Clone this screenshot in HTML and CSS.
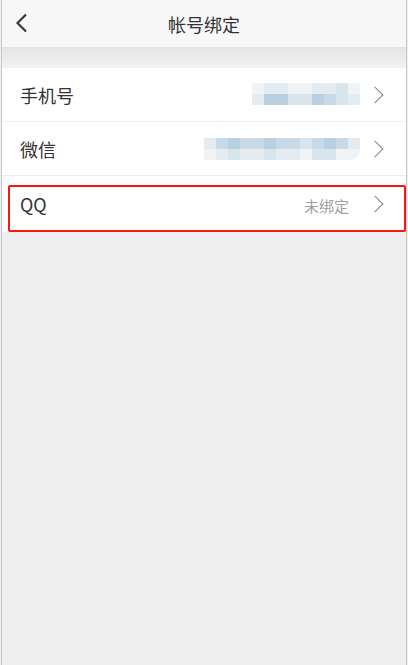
FILE: index.html
```html
<!DOCTYPE html>
<html lang="zh-CN">
<head>
    <meta charset="utf-8">
    <title>帐号绑定</title>
    <link rel="stylesheet" href="styles.css">
</head>
<body>
<div class="page">
    <header class="topbar">
        <a class="back" href="#">
            <svg width="14" height="20" viewBox="0 0 14 20"><path d="M11 1.5 L2.5 10 L11 18.5" fill="none" stroke="#3a3a3a" stroke-width="2.2"/></svg>
        </a>
        <h1>帐号绑定</h1>
    </header>
    <div class="gap"></div>
    <ul class="list">
        <li class="row">
            <span class="label">手机号</span>
            <div class="blur phone">
                <div class="tiles">
                    <i class="t1"></i><i class="t2"></i><i class="t2"></i><i class="t1"></i><i class="t1"></i><i class="t2"></i><i class="t2"></i><i class="t3"></i><i class="t1"></i>
                </div>
                <div class="tiles">
                    <i class="t2"></i><i class="t5"></i><i class="t5"></i><i class="t3"></i><i class="t3"></i><i class="t5"></i><i class="t4"></i><i class="t3"></i><i class="t2"></i>
                </div>
            </div>
            <span class="arrow"></span>
        </li>
        <li class="row">
            <span class="label">微信</span>
            <div class="blur wechat">
                <div class="tiles">
                    <i class="t2"></i><i class="t4"></i><i class="t5"></i><i class="t4"></i><i class="t4"></i><i class="t5"></i><i class="t4"></i><i class="t4"></i><i class="t3"></i><i class="t4"></i><i class="t5"></i><i class="t4"></i><i class="t2"></i>
                </div>
                <div class="tiles">
                    <i class="t1"></i><i class="t2"></i><i class="t3"></i><i class="t2"></i><i class="t2"></i><i class="t3"></i><i class="t2"></i><i class="t2"></i><i class="t1"></i><i class="t3"></i><i class="t3"></i><i class="t1"></i><i class="t1"></i>
                </div>
            </div>
            <span class="arrow"></span>
        </li>
        <li class="row qq">
            <span class="label">QQ</span>
            <span class="status">未绑定</span>
            <span class="arrow"></span>
            <div class="highlight"></div>
        </li>
    </ul>
</div>
</body>
</html>
```

FILE: styles.css
```css
html, body{
    margin: 0;
    padding: 0;
    height: 100%;
}
body{
    background: #efefef;
    font-family: "Noto Sans CJK SC", "Noto Sans", sans-serif;
    color: #333;
}
.page{
    margin: 0 1px;
    min-height: 100%;
    border-left: 1px solid #c9c9c9;
    border-right: 1px solid #c9c9c9;
    background: #efefef;
    box-sizing: border-box;
}
.topbar{
    height: 47px;
    display: flex;
    align-items: center;
    justify-content: center;
    background: #f7f7f7;
    border-bottom: 1px solid #e2e2e2;
    position: relative;
}
.topbar h1{
    margin: 0;
    font-size: 18px;
    font-weight: normal;
    color: #333;
}
.back{
    position: absolute;
    left: 13px;
    top: 13px;
    line-height: 0;
}
.gap{
    height: 20px;
    background: linear-gradient(#e6e6e6, #ececec 60%, #f2f2f2);
}
.list{
    list-style: none;
    margin: 0;
    padding: 0;
    background: #fff;
}
.row{
    display: flex;
    align-items: center;
    height: 54px;
    padding: 0 22px 0 18px;
    border-bottom: 1px solid #ececec;
    box-sizing: border-box;
}
.row:last-child{
    border-bottom: none;
    height: 56px;
}
.label{
    font-size: 18px;
    flex: 1;
}
.status{
    font-size: 15px;
    color: #a0a0a0;
    margin-right: 20px;
}
.arrow{
    width: 11px;
    height: 11px;
    border-top: 1.7px solid #858585;
    border-right: 1.7px solid #858585;
    transform: rotate(45deg);
    margin-right: 3px;
}
.blur{
    margin-right: 9px;
    display: flex;
    flex-direction: column;
}
.phone{
    margin-top: -2px;
}
.wechat{
    border-radius: 0 0 10px 0;
    overflow: hidden;
}
.tiles{
    display: flex;
}
.tiles i{
    display: block;
    width: 12px;
    height: 11px;
}
.t1{ background: #f0f4f7; }
.t2{ background: #e4ecf2; }
.t3{ background: #d8e5ed; }
.t4{ background: #c8dae7; }
.t5{ background: #b9d0e2; }
.qq{
    position: relative;
}
.qq .status{
    margin-top: 2px;
}
.highlight{
    position: absolute;
    left: 6px;
    right: 0;
    top: 9px;
    bottom: 0;
    border: 2px solid #ff1414;
    border-radius: 2px;
}
```
